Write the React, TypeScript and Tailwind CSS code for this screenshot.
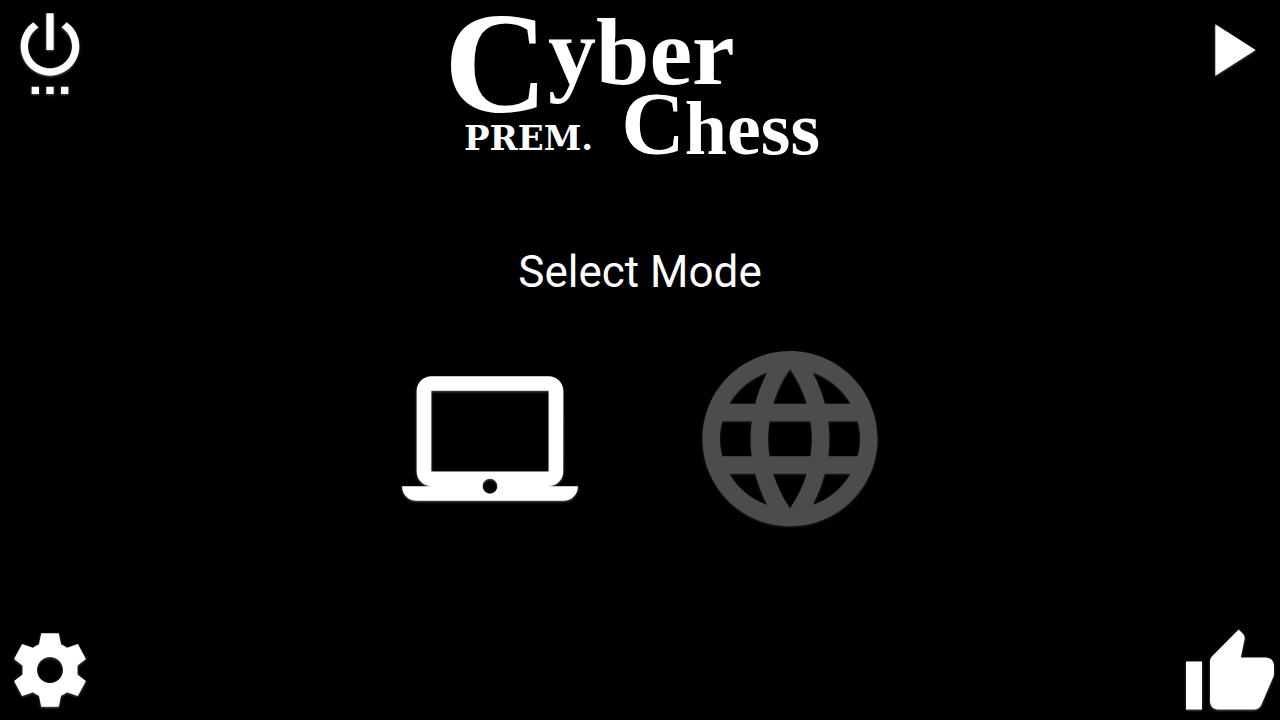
import { useState } from "react";

const ICONS = {
  power:
    "M7 24h2v-2H7v2zm4 0h2v-2h-2v2zm2-22h-2v10h2V2zm3.56 2.44l-1.45 1.45C16.84 6.94 18 8.83 18 11c0 3.31-2.69 6-6 6s-6-2.69-6-6c0-2.17 1.16-4.06 2.88-5.12L7.44 4.44C5.36 5.88 4 8.28 4 11c0 4.42 3.58 8 8 8s8-3.58 8-8c0-2.72-1.36-5.12-3.44-6.56zM15 24h2v-2h-2v2z",
  play: "M8 5v14l11-7z",
  settings:
    "M9.6 2h4.8l.6 2.95q.8.35 1.65.95L19.6 4.9l2.2 4.1-2.3 1.8v2.4l2.3 1.8-2.2 4.1-2.95-1q-.85.6-1.65.95L14.4 22H9.6L9 19.05q-.8-.35-1.65-.95l-2.95 1L2.2 15l2.3-1.8v-2.4L2.2 9l2.2-4.1 2.95 1Q8.2 5.3 9 4.95zM12 15.55c1.95 0 3.55-1.6 3.55-3.55S13.95 8.45 12 8.45 8.45 10.05 8.45 12s1.6 3.55 3.55 3.55z",
  like: "M1 21h4V9H1v12zm22-11c0-1.1-.9-2-2-2h-6.31l.95-4.57.03-.32c0-.41-.17-.79-.44-1.06L14.17 1 7.59 7.59C7.22 7.95 7 8.45 7 9v10c0 1.1.9 2 2 2h9c.83 0 1.54-.5 1.84-1.22l3.02-7.05c.09-.23.14-.47.14-.73v-2z",
  laptop:
    "M20 18c1.1 0 1.99-.9 1.99-2L22 5c0-1.1-.9-2-2-2H4c-1.1 0-2 .9-2 2v11c0 1.1.9 2 2 2H0c0 1.1.9 2 2 2h20c1.1 0 2-.9 2-2h-4zM4 5h16v11H4V5zm8 14c-.55 0-1-.45-1-1s.45-1 1-1 1 .45 1 1-.45 1-1 1z",
  globe:
    "M11.99 2C6.47 2 2 6.48 2 12s4.47 10 9.99 10C17.52 22 22 17.52 22 12S17.52 2 11.99 2zm6.93 6h-2.95c-.32-1.25-.78-2.45-1.38-3.56 1.84.63 3.37 1.91 4.33 3.56zM12 4.04c.83 1.2 1.48 2.53 1.91 3.96h-3.82c.43-1.43 1.08-2.76 1.91-3.96zM4.26 14C4.1 13.36 4 12.69 4 12s.1-1.36.26-2h3.38c-.08.66-.14 1.32-.14 2 0 .68.06 1.34.14 2H4.26zm.82 2h2.95c.32 1.25.78 2.45 1.38 3.56-1.84-.63-3.37-1.9-4.33-3.56zm2.95-8H5.08c.96-1.66 2.49-2.93 4.33-3.56C8.81 5.55 8.35 6.75 8.03 8zM12 19.96c-.83-1.2-1.48-2.53-1.91-3.96h3.82c-.43 1.43-1.08 2.76-1.91 3.96zM14.34 14H9.66c-.09-.66-.16-1.32-.16-2 0-.68.07-1.35.16-2h4.68c.09.65.16 1.32.16 2 0 .68-.07 1.34-.16 2zm.25 5.56c.6-1.11 1.06-2.31 1.38-3.56h2.95c-.96 1.65-2.49 2.93-4.33 3.56zM16.36 14c.08-.66.14-1.32.14-2 0-.68-.06-1.34-.14-2h3.38c.16.64.26 1.31.26 2s-.1 1.36-.26 2h-3.38z",
};

interface IconButtonProps {
  label: string;
  path: string;
  viewBox?: string;
  className: string;
  iconClassName: string;
  pressed?: boolean;
  onClick?: () => void;
}

function IconButton({
  label,
  path,
  viewBox = "0 0 24 24",
  className,
  iconClassName,
  pressed,
  onClick,
}: IconButtonProps) {
  return (
    <button
      type="button"
      aria-label={label}
      aria-pressed={pressed}
      onClick={onClick}
      className={`flex shrink-0 cursor-pointer items-center justify-center ${className}`}
    >
      <svg viewBox={viewBox} fill="currentColor" className={iconClassName} aria-hidden="true">
        <path d={path} />
      </svg>
    </button>
  );
}

function Logo() {
  return (
    <h1 className="flex h-40 w-100 flex-col pl-1 pr-5 font-['Liberation_Serif',serif] font-bold">
      <span className="flex h-24 items-start">
        <span className="text-[144px] leading-[128px]">C</span>
        <span className="text-[96px] leading-[104px]">yber</span>
      </span>
      <span className="flex h-16 items-end justify-between pl-5">
        <span className="font-['DejaVu_Serif',serif] text-[34px] leading-11">PREM.</span>
        <span className="flex items-start">
          <span className="text-[88px] leading-14">C</span>
          <span className="text-[76px] leading-16">hess</span>
        </span>
      </span>
    </h1>
  );
}

export default function App() {
  const [mode, setMode] = useState("computer");

  return (
    <div className="flex min-h-screen flex-col bg-black font-[Roboto,sans-serif] text-white">
      <header className="flex items-start justify-between">
        <IconButton
          label="Exit"
          path={ICONS.power}
          className="size-25"
          iconClassName="size-22 drop-shadow-[0_1px_1px_#555]"
        />
        <Logo />
        <IconButton
          label="Play"
          path={ICONS.play}
          className="size-25"
          iconClassName="size-22 drop-shadow-[0_1px_1px_#555]"
        />
      </header>

      {/* Mode picker */}
      <main className="flex flex-1 flex-col items-center justify-center gap-9">
        <h2 className="text-[44px] leading-16">Select Mode</h2>
        <div className="flex gap-25">
          <IconButton
            label="Play against computer"
            path={ICONS.laptop}
            viewBox="0 -0.3 24 24"
            className={mode === "computer" ? "size-50 text-white" : "size-50 text-[#4c4c4c]"}
            iconClassName="size-44 drop-shadow-[0_1px_1px_#555]"
            pressed={mode === "computer"}
            onClick={() => setMode("computer")}
          />
          <IconButton
            label="Play online"
            path={ICONS.globe}
            viewBox="1.95 2.1 20.1 20.1"
            className={mode === "online" ? "size-50 text-white" : "size-50 text-[#4c4c4c]"}
            iconClassName="size-44 overflow-visible drop-shadow-[0_1px_1px_#222]"
            pressed={mode === "online"}
            onClick={() => setMode("online")}
          />
        </div>
      </main>

      <footer className="flex items-end justify-between">
        <IconButton
          label="Settings"
          path={ICONS.settings}
          className="size-25"
          iconClassName="size-22 drop-shadow-[0_1px_1px_#555]"
        />
        <IconButton
          label="Rate"
          path={ICONS.like}
          viewBox="0 -0.9 24 24"
          className="size-25"
          iconClassName="size-24 drop-shadow-[0_1px_1px_#555]"
        />
      </footer>
    </div>
  );
}
